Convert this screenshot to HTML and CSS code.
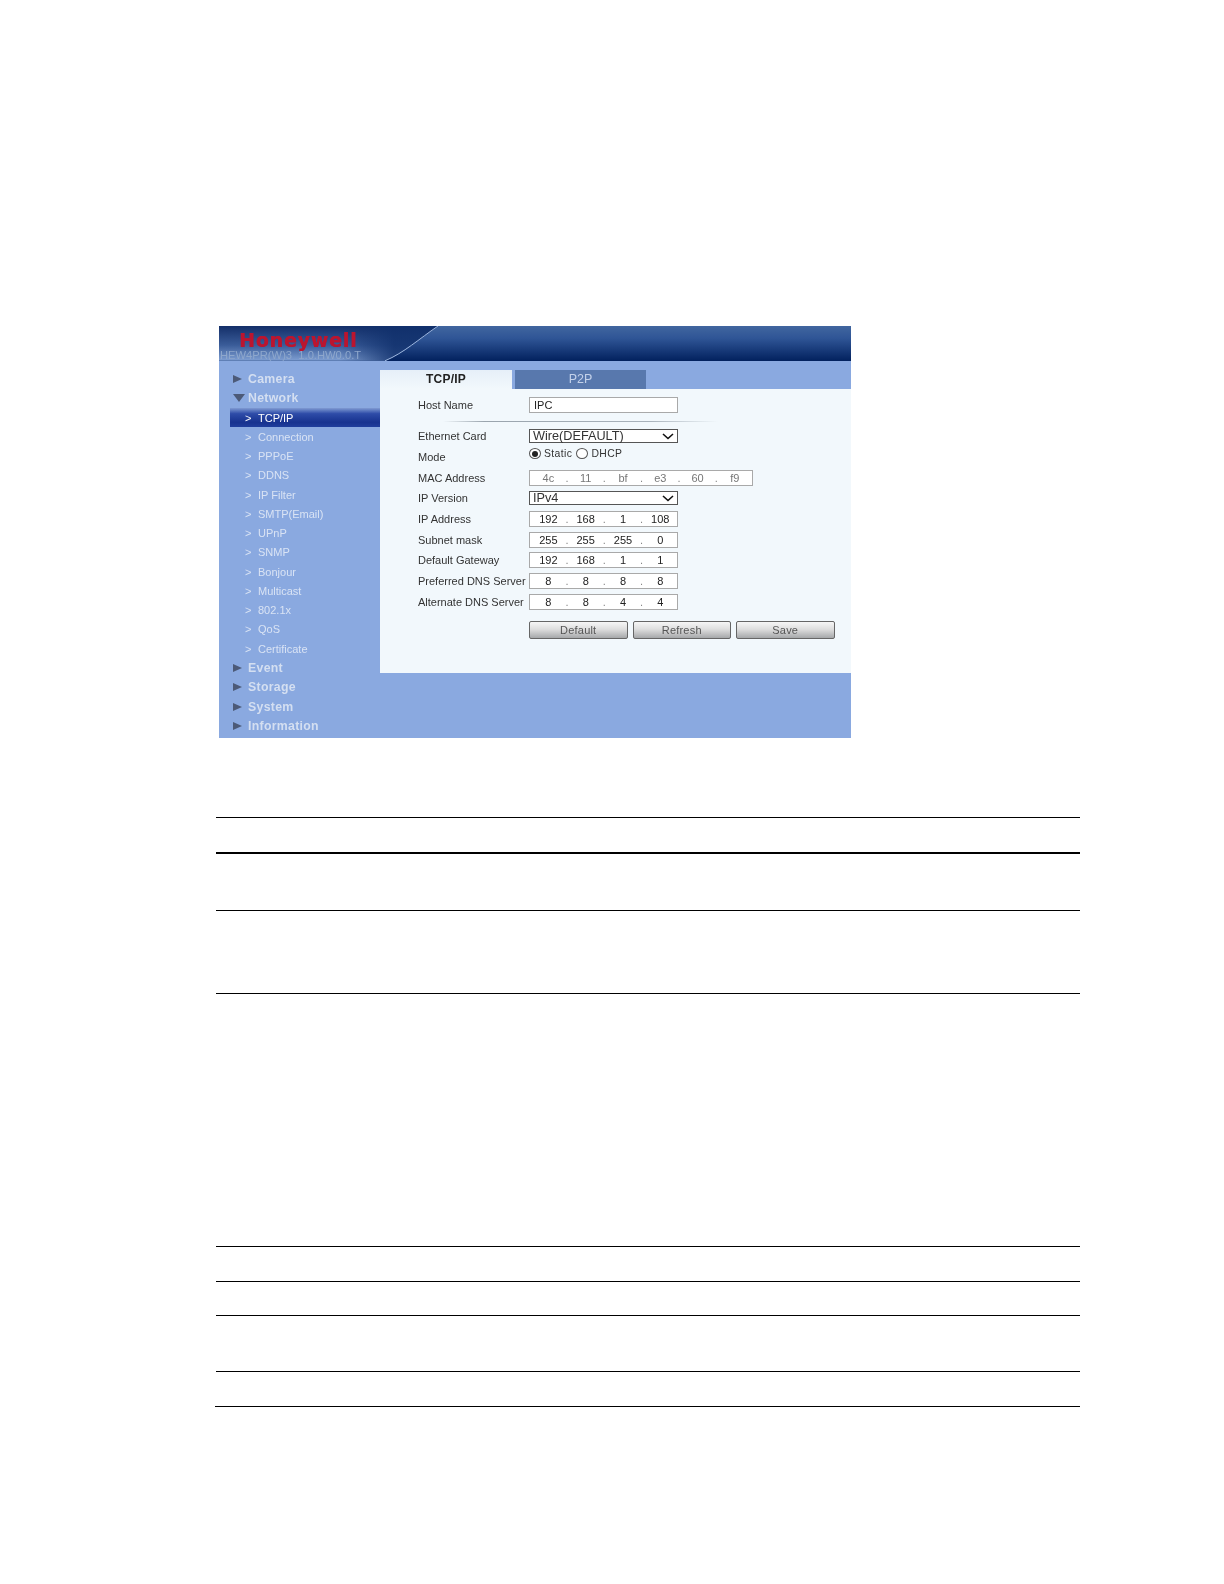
FILE: index.html
```html
<!DOCTYPE html>
<html lang="en">
<head>
<meta charset="utf-8">
<title>TCP/IP</title>
<link rel="stylesheet" href="styles.css">
</head>
<body>
<main class="page">
  <section class="panel">
    <header class="banner">
      <svg class="swoosh" viewBox="0 0 240 35" preserveAspectRatio="none" aria-hidden="true">
        <defs>
          <linearGradient id="leftFill" x1="0" y1="0" x2="0" y2="1">
            <stop offset="0" stop-color="#142f69"/>
            <stop offset="0.55" stop-color="#3a5c99"/>
            <stop offset="1" stop-color="#7f9fd2"/>
          </linearGradient>
          <linearGradient id="leftFade" x1="0" y1="0" x2="1" y2="0">
            <stop offset="0.55" stop-color="#10306c" stop-opacity="0"/>
            <stop offset="0.8" stop-color="#10306c" stop-opacity="0.85"/>
          </linearGradient>
        </defs>
        <path d="M0 0H219C200 13 185 27 166 35H0Z" fill="url(#leftFill)"/>
        <path d="M0 0H219C200 13 185 27 166 35H0Z" fill="url(#leftFade)"/>
        <path d="M219 0C200 13 185 27 166 35" fill="none" stroke="#9db6de" stroke-width="1"/>
      </svg>
      <div class="brand">Honeywell</div>
      <div class="version">HEW4PR(W)3&nbsp; 1.0.HW0.0.T</div>
    </header>
    <div class="workspace">
      <nav class="side">
        <div class="top"><i class="tri"></i>Camera</div>
        <div class="top"><i class="tri down"></i>Network</div>
        <div class="sub current"><i class="chev">&gt;</i>TCP/IP</div>
        <div class="sub"><i class="chev">&gt;</i>Connection</div>
        <div class="sub"><i class="chev">&gt;</i>PPPoE</div>
        <div class="sub"><i class="chev">&gt;</i>DDNS</div>
        <div class="sub"><i class="chev">&gt;</i>IP Filter</div>
        <div class="sub"><i class="chev">&gt;</i>SMTP(Email)</div>
        <div class="sub"><i class="chev">&gt;</i>UPnP</div>
        <div class="sub"><i class="chev">&gt;</i>SNMP</div>
        <div class="sub"><i class="chev">&gt;</i>Bonjour</div>
        <div class="sub"><i class="chev">&gt;</i>Multicast</div>
        <div class="sub"><i class="chev">&gt;</i>802.1x</div>
        <div class="sub"><i class="chev">&gt;</i>QoS</div>
        <div class="sub"><i class="chev">&gt;</i>Certificate</div>
        <div class="top"><i class="tri"></i>Event</div>
        <div class="top"><i class="tri"></i>Storage</div>
        <div class="top"><i class="tri"></i>System</div>
        <div class="top"><i class="tri"></i>Information</div>
      </nav>
      <div class="main">
        <div class="tabs">
          <div class="tab active">TCP/IP</div>
          <div class="tab">P2P</div>
        </div>
        <form class="form">
          <div class="row"><span class="label">Host Name</span><div class="box text">IPC</div></div>
          <div class="divider"></div>
          <div class="row"><span class="label">Ethernet Card</span>
            <div class="select">Wire(DEFAULT)<svg class="caret" viewBox="0 0 12 7"><path d="M1 1l5 4.5L11 1" fill="none" stroke="#111" stroke-width="1.6"/></svg></div>
          </div>
          <div class="row"><span class="label">Mode</span>
            <div class="radios">
              <span class="radio on"></span><span class="radio-text">Static</span>
              <span class="radio"></span><span class="radio-text">DHCP</span>
            </div>
          </div>
          <div class="row"><span class="label">MAC Address</span>
            <div class="box ip mac"><span>4c</span><b>.</b><span>11</span><b>.</b><span>bf</span><b>.</b><span>e3</span><b>.</b><span>60</span><b>.</b><span>f9</span></div>
          </div>
          <div class="row"><span class="label">IP Version</span>
            <div class="select">IPv4<svg class="caret" viewBox="0 0 12 7"><path d="M1 1l5 4.5L11 1" fill="none" stroke="#111" stroke-width="1.6"/></svg></div>
          </div>
          <div class="row"><span class="label">IP Address</span>
            <div class="box ip"><span>192</span><b>.</b><span>168</span><b>.</b><span>1</span><b>.</b><span>108</span></div>
          </div>
          <div class="row"><span class="label">Subnet mask</span>
            <div class="box ip"><span>255</span><b>.</b><span>255</span><b>.</b><span>255</span><b>.</b><span>0</span></div>
          </div>
          <div class="row"><span class="label">Default Gateway</span>
            <div class="box ip"><span>192</span><b>.</b><span>168</span><b>.</b><span>1</span><b>.</b><span>1</span></div>
          </div>
          <div class="row"><span class="label">Preferred DNS Server</span>
            <div class="box ip"><span>8</span><b>.</b><span>8</span><b>.</b><span>8</span><b>.</b><span>8</span></div>
          </div>
          <div class="row"><span class="label">Alternate DNS Server</span>
            <div class="box ip"><span>8</span><b>.</b><span>8</span><b>.</b><span>4</span><b>.</b><span>4</span></div>
          </div>
          <div class="actions">
            <div class="btn">Default</div>
            <div class="btn">Refresh</div>
            <div class="btn">Save</div>
          </div>
        </form>
      </div>
    </div>
  </section>
  <section class="rules">
    <div class="rule r1"></div>
    <div class="rule r2"></div>
    <div class="rule r3"></div>
    <div class="rule r4"></div>
    <div class="rule r5"></div>
    <div class="rule r6"></div>
    <div class="rule r7"></div>
    <div class="rule r8"></div>
    <div class="rule r9"></div>
  </section>
</main>
</body>
</html>
```
FILE: styles.css
```css
* { box-sizing: border-box; }
html, body { margin: 0; padding: 0; background: #fff; }
body { font-family: "Liberation Sans", Arial, sans-serif; }
.page { height: 1584px; padding-top: 326px; overflow: hidden; }

.panel {
  width: 632px;
  height: 412px;
  margin-left: 219px;
  background: #8aa9e0;
  filter: blur(0.35px);
}

.banner {
  position: relative;
  height: 34.8px;
  background: linear-gradient(#41669f, #2f5596 35%, #02215e);
}
.swoosh { position: absolute; left: 0; top: 0; width: 240px; height: 34.8px; }
.brand {
  position: absolute;
  left: 20px;
  top: 2px;
  font: bold 19px/24px "DejaVu Sans", sans-serif;
  color: #bb152f;
  letter-spacing: 0.8px;
  text-shadow: 0.3px 0 0 #bb152f;
}
.version {
  position: absolute;
  left: 1px;
  top: 22.5px;
  font-size: 11.2px;
  line-height: 13px;
  color: #8ea7cc;
  white-space: nowrap;
}

.workspace { display: flex; height: 377.2px; }
.side { width: 161px; padding: 8.6px 0 0 11px; flex: none; }
.top, .sub {
  display: flex;
  align-items: center;
  height: 19.28px;
  white-space: nowrap;
}
.top {
  font-size: 12.3px;
  font-weight: bold;
  letter-spacing: 0.3px;
  color: #d4dff1;
  padding-left: 3px;
}
.tri {
  width: 0;
  height: 0;
  margin-right: 6px;
  border-top: 4.5px solid transparent;
  border-bottom: 4.5px solid transparent;
  border-left: 9px solid #4c5a78;
}
.tri.down {
  margin-right: 3px;
  border-left: 6px solid transparent;
  border-right: 6px solid transparent;
  border-top: 8px solid #4c5a78;
  border-bottom: 0;
}
.sub {
  font-size: 11px;
  color: #d9e3f4;
  padding-left: 15px;
}
.chev {
  width: 13px;
  font-style: normal;
  font-size: 11px;
}
.sub.current {
  color: #fff;
  background: linear-gradient(#7f9ad2, #2e4ca8 30%, #17328f 75%, #1f3d9c);
}

.main { flex: 1; display: flex; flex-direction: column; padding-top: 9.6px; }
.tabs { display: flex; height: 19px; gap: 3px; flex: none; }
.tab {
  width: 131px;
  background: #5878ad;
  color: #c4d2ea;
  font-size: 12.5px;
  line-height: 19px;
  text-align: center;
}
.tab.active {
  width: 132px;
  background: linear-gradient(#e6eff8, #f2f8fc);
  color: #222;
  font-size: 12px;
  font-weight: bold;
  letter-spacing: 0.2px;
}

.form {
  height: 284px;
  background: #f2f8fc;
  padding: 5.4px 0 0 38px;
  font-size: 11px;
  color: #333;
}
.row { display: flex; align-items: center; height: 20.7px; }
.label { width: 111px; flex: none; white-space: nowrap; }
.divider {
  width: 275px;
  height: 1px;
  margin: 5.5px 0 4px 25px;
  background: linear-gradient(90deg, transparent, #9aa4ad 15%, #a8b2bb 75%, transparent);
}
.box {
  display: flex;
  align-items: center;
  width: 149px;
  height: 16px;
  background: #fff;
  border: 1px solid #a9a9a9;
  color: #222;
}
.text { padding-left: 4px; }
.ip { padding-left: 4.4px; }
.ip span { width: 28px; flex: none; text-align: center; }
.ip b {
  width: 9.3px;
  flex: none;
  text-align: center;
  font-weight: normal;
  color: #888;
}
.mac { width: 224px; color: #777; }
.select {
  display: flex;
  align-items: center;
  justify-content: space-between;
  width: 149px;
  height: 14px;
  padding: 0 2px 0 3px;
  background: #fff;
  border: 1px solid #555;
  font-size: 12.7px;
  color: #333;
}
.caret { width: 12px; height: 7px; margin-right: 1px; }
.radios {
  display: flex;
  align-items: center;
  height: 12px;
  margin-top: -7px;
  font-size: 10.4px;
  letter-spacing: 0.4px;
}
.radio {
  width: 12px;
  height: 11px;
  border: 1px solid #555;
  border-radius: 50%;
  background: #fff;
  position: relative;
  margin-right: 3px;
}
.radio.on::after {
  content: "";
  position: absolute;
  left: 2px;
  top: 1.5px;
  width: 6px;
  height: 6px;
  border-radius: 50%;
  background: #222;
}
.radio-text { margin-right: 4px; }
.actions { display: flex; gap: 5px; margin: 8.4px 0 0 111px; }
.btn {
  width: 98.5px;
  height: 18px;
  border: 1px solid #666;
  border-radius: 2px;
  background: linear-gradient(#f6f6f6, #dedede 45%, #a6a8aa);
  color: #555;
  line-height: 16px;
  text-align: center;
  letter-spacing: 0.2px;
}

.rules { padding-top: 79px; margin-left: 216px; width: 864px; }
.rule { height: 1px; background: #000; }
.r2 { margin-top: 34px; height: 2px; }
.r3 { margin-top: 56px; }
.r4 { margin-top: 82px; }
.r5 { margin-top: 252px; }
.r6 { margin-top: 34px; }
.r7 { margin-top: 33px; }
.r8 { margin-top: 55px; }
.r9 { margin-top: 34px; margin-left: -1px; }
```
